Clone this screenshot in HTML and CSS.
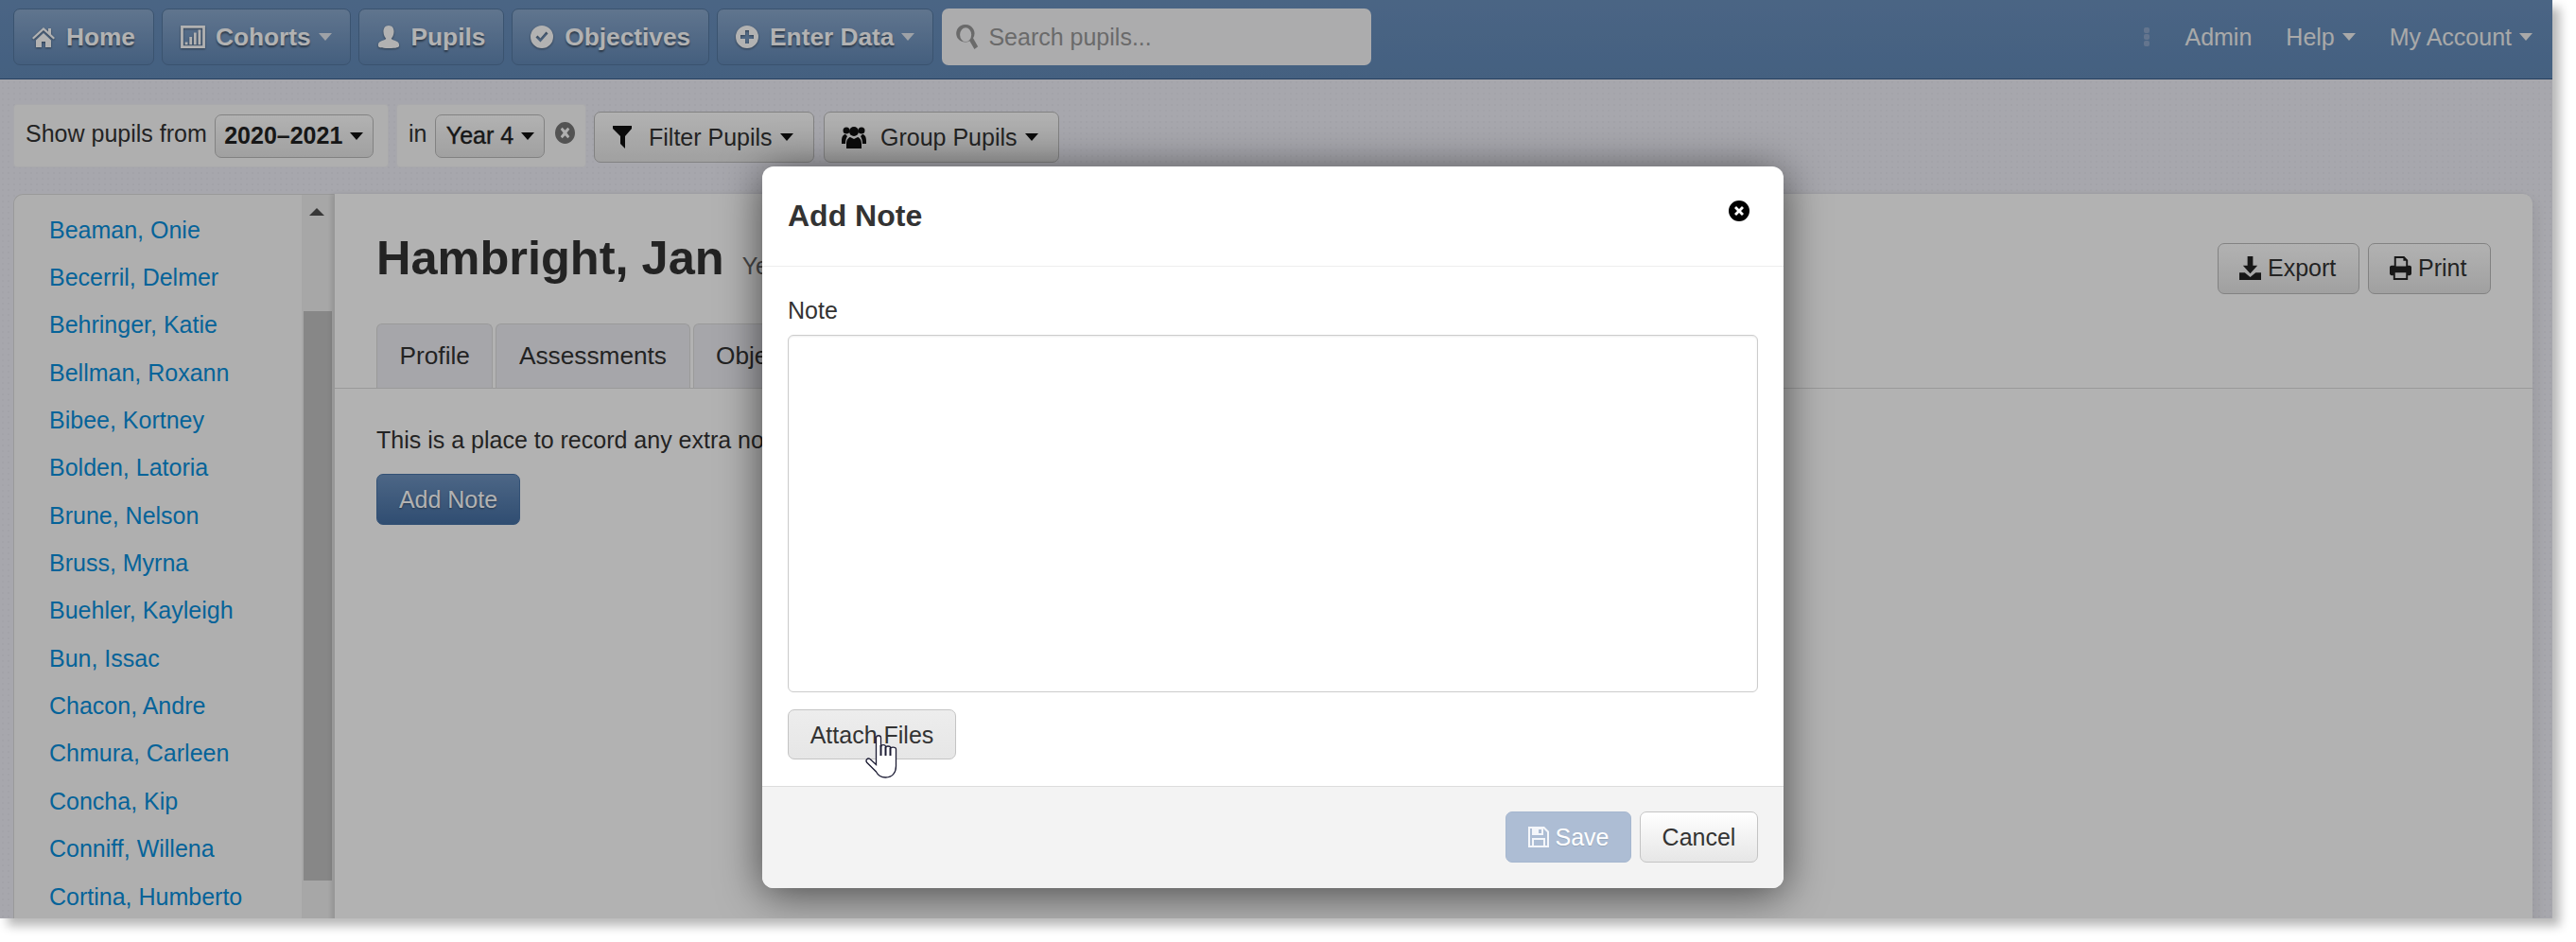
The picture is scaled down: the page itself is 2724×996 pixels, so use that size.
FILE: index.html
```html
<!DOCTYPE html>
<html lang="en">
<head>
<meta charset="utf-8">
<title>Add Note</title>
<link rel="stylesheet" href="styles.css">
</head>
<body>
<div class="window">
  <header class="navbar">
    <a class="nav-btn"><svg class="ni" viewBox="0 0 24 24"><path d="M12 2 0 13l1.500 1.500L12 5l10.500 9.500L24 13l-4-3.700V3h-3v3.500zM4 15.500V23h6v-6h4v6h6v-7.500L12 8z"/></svg>Home</a>
    <a class="nav-btn"><svg class="ni ni-chart" viewBox="0 0 28 26"><path d="M0 0h28v26H0zm3 3v20h22V3zm2 16h3v3H5zm5-6h3v9h-3zm5-5h3v14h-3zm5-3h3v17h-3z" fill-rule="evenodd"/></svg>Cohorts<i class="caret"></i></a>
    <a class="nav-btn"><svg class="ni" viewBox="0 0 24 26"><path d="M12 0c4 0 6 3 6 7s-2 7-3 8c0 2 9 2 9 7v1c0 2-3 3-12 3S0 25 0 23v-1c0-5 9-5 9-7-1-1-3-4-3-8s2-7 6-7z"/></svg>Pupils</a>
    <a class="nav-btn"><svg class="ni" viewBox="0 0 24 24"><path fill-rule="evenodd" d="M12 0a12 12 0 1 0 0 24 12 12 0 0 0 0-24zm6.500 8.500-8 9-5-5 2-2 3 3 6-7z"/></svg>Objectives</a>
    <a class="nav-btn"><svg class="ni" viewBox="0 0 24 24"><path fill-rule="evenodd" d="M12 0a12 12 0 1 0 0 24 12 12 0 0 0 0-24zm-2 5h4v5h5v4h-5v5h-4v-5H5v-4h5z"/></svg>Enter Data<i class="caret"></i></a>
    <div class="search"><svg class="search-icon" viewBox="0 0 24 28"><path fill-rule="evenodd" d="M10 0a10 10 0 0 1 8.500 15.300L24 25l-4 3-5.500-9.500A10 10 0 1 1 10 0zm0 3.500a6.500 8 0 1 0 0 16 6.500 8 0 0 0 0-16z"/></svg><span>Search pupils...</span></div>
    <div class="nav-right">
      <span class="kebab"><b></b><b></b><b></b></span>
      <a class="nav-link link-admin">Admin</a>
      <a class="nav-link link-help">Help<i class="caret"></i></a>
      <a class="nav-link">My Account<i class="caret"></i></a>
    </div>
  </header>

  <section class="filters">
    <div class="well well-year"><span>Show pupils from</span><button class="drop">2020–2021<i class="caret dark"></i></button></div>
    <div class="well well-in"><span>in</span><button class="drop">Year 4<i class="caret dark"></i></button><svg class="clear" viewBox="0 0 22 24"><path fill-rule="evenodd" d="M11 0a11 12 0 1 0 0 24 11 12 0 0 0 0-24zM6 8l2-2 3 3 3-3 2 2-3 4 3 4-2 2-3-3-3 3-2-2 3-4z"/></svg></div>
    <button class="tool tool-filter"><svg class="ti" viewBox="0 0 20 24"><path d="M0 0h20v3l-7 8v13l-5-5v-8L0 3z"/></svg>Filter Pupils<i class="caret dark"></i></button>
    <button class="tool tool-group"><svg class="ti ti-group" viewBox="0 0 26 24"><circle cx="5" cy="5" r="3.500"/><circle cx="21" cy="5" r="3.500"/><circle cx="13" cy="6" r="5"/><path d="M0 16c0-5 2-7 4-7l2 2c-1 2-2 4-2 8H0zM26 16c0-5-2-7-4-7l-2 2c1 2 2 4 2 8h4zM5 24v-5c0-5 3-7 4-7l4 2 4-2c1 0 4 2 4 7v5z"/></svg>Group Pupils<i class="caret dark"></i></button>
  </section>

  <div class="content">
    <aside class="sidebar">
      <ul class="pupil-list">
        <li>Beaman, Onie</li>
        <li>Becerril, Delmer</li>
        <li>Behringer, Katie</li>
        <li>Bellman, Roxann</li>
        <li>Bibee, Kortney</li>
        <li>Bolden, Latoria</li>
        <li>Brune, Nelson</li>
        <li>Bruss, Myrna</li>
        <li>Buehler, Kayleigh</li>
        <li>Bun, Issac</li>
        <li>Chacon, Andre</li>
        <li>Chmura, Carleen</li>
        <li>Concha, Kip</li>
        <li>Conniff, Willena</li>
        <li>Cortina, Humberto</li>
      </ul>
      <div class="scrollbar"><i class="arrow"></i><div class="thumb"></div></div>
    </aside>
    <main class="main">
      <div class="main-head">
        <h1>Hambright, Jan <small>Year 4</small></h1>
        <div class="actions">
          <button class="tool tool-sm tool-export"><svg class="ti ti-sm" viewBox="0 0 24 26"><path d="M9 0h6v10h5l-8 9-8-9h5zM0 18h6l6 5 6-5h6v8H0z"/></svg>Export</button>
          <button class="tool tool-sm tool-print"><svg class="ti ti-sm" viewBox="0 0 24 26"><path fill-rule="evenodd" d="M5 0h11l4 4v6h2c1 0 2 1 2 2v7c0 1-1 2-2 2h-2v5H4v-5H2c-1 0-2-1-2-2v-7c0-1 1-2 2-2h3zm2 2v9h11V5h-3V2zM6 18v6h12v-6z"/></svg>Print</button>
        </div>
      </div>
      <nav class="tabs">
        <a class="tab">Profile</a>
        <a class="tab">Assessments</a>
        <a class="tab">Objectives</a>
        <a class="tab">Notes</a>
      </nav>
      <div class="tab-body">
        <p>This is a place to record any extra notes about this pupil.</p>
        <button class="add-note">Add Note</button>
      </div>
    </main>
  </div>

  <div class="backdrop"></div>
  <div class="modal">
    <div class="modal-head">
      <h2>Add Note</h2>
      <svg class="modal-close" viewBox="0 0 22 22"><path fill-rule="evenodd" d="M11 0a11 11 0 1 0 0 22 11 11 0 0 0 0-22zM6 8l2-2 3 3 3-3 2 2-3 3 3 3-2 2-3-3-3 3-2-2 3-3z"/></svg>
    </div>
    <div class="modal-body">
      <label class="note-label">Note</label>
      <div class="note-area"></div>
      <button class="attach">Attach Files</button>
      <svg class="hand" viewBox="0 0 35 46"><path d="M11.500 3c0-3 5-3 5 0v9.500c0-2.500 5-2.500 5 0v1c0-2 5-2 5 0v1c0-2 6-2 6 .5V33c0 7-4 12-11 12-5 0-8-2-10-6L1.500 29c-1.500-2.500 1-5 3.500-3.500l6.500 6z" fill="#fff" stroke="#1c1c34" stroke-width="1.300"/><path d="M16.500 11v11M21.500 13v9M26.500 14v8" stroke="#1c1c34" stroke-width="2" fill="none"/></svg>
    </div>
    <div class="modal-foot">
      <button class="save"><svg class="save-icon" viewBox="0 0 22 22"><path fill-rule="evenodd" d="M0 0h17l5 5v17H0zm2 2v18h2v-8h14v8h2V6l-4-4v7H4V2zm4 12v6h10v-6zM11 3v4h3V3z"/></svg>Save</button>
      <button class="cancel">Cancel</button>
    </div>
  </div>
</div>
</body>
</html>
```

FILE: styles.css
```css
* { box-sizing: border-box; }
html, body { margin: 0; padding: 0; background: #fff; }
body { font-family: "Liberation Sans", Arial, sans-serif; font-size: 25px; color: #333; }
button { font: inherit; cursor: default; }

.window {
  position: relative;
  width: 2699px;
  height: 971px;
  margin-bottom: 25px;
  overflow: hidden;
  background-color: #f0f0f8;
  background-image: radial-gradient(circle, rgba(0,0,0,.025) 1px, transparent 1.5px);
  background-size: 6px 6px;
  box-shadow: 8px 8px 10px rgba(0,0,0,.28);
}

/* navbar */
.navbar {
  display: flex;
  align-items: flex-start;
  gap: 8px;
  height: 84px;
  padding: 9px 14px 0;
  background: linear-gradient(#6b91be, #628ab8);
  border-bottom: 1px solid #3a5f8c;
}
.nav-btn {
  display: flex;
  align-items: center;
  height: 60px;
  padding: 0 19px;
  border: 1px solid #54779f;
  border-radius: 7px;
  background: linear-gradient(#8aa8cc, #6288b5);
  color: #fff;
  font-weight: bold;
  font-size: 26.25px;
  text-shadow: 0 2px 2px rgba(0,0,0,.45);
}
.ni { width: 24px; height: 24px; fill: #fff; margin-right: 12px; flex: none; filter: drop-shadow(0 1px 1px rgba(0,0,0,.4)); }
.ni-chart { width: 26px; height: 24px; margin-right: 11px; }
.caret {
  display: inline-block;
  width: 0; height: 0;
  margin-left: 8px;
  border-left: 7px solid transparent;
  border-right: 7px solid transparent;
  border-top: 8px solid currentColor;
}
.caret.dark { color: #111; }
.nav-btn .caret { color: #e3e8f0; }
.search {
  display: flex;
  align-items: center;
  width: 454px;
  height: 60px;
  margin-left: 1px;
  padding-left: 15px;
  background: #f6f6f8;
  border-radius: 7px;
  color: #999;
  font-size: 25px;
}
.search-icon { width: 24px; height: 26px; fill: #999; margin-right: 10px; }
.nav-right { display: flex; align-items: center; height: 60px; margin-left: auto; padding-right: 7px; color: #eee; }
.nav-link { display: flex; align-items: center; color: #f2f2f2; }
.link-admin { margin-right: 36px; }
.link-help { margin-right: 36px; }
.kebab { display: flex; flex-direction: column; gap: 1px; margin-right: 37px; }
.kebab b { width: 6px; height: 6px; border-radius: 2px; background: #90a8cc; }

/* filters */
.filters { display: flex; align-items: flex-start; gap: 8px; padding: 26px 0 0 14px; height: 93px; }
.well {
  display: flex;
  align-items: center;
  height: 67px;
  background: #fbfbfb;
  border: 1px solid #f2f2f6;
  border-radius: 4px;
  padding-left: 12px;
  white-space: nowrap;
}
.well-year { width: 397px; }
.well-in { width: 201px; padding-left: 12px; }
.well span { position: relative; top: -2px; }
.drop {
  display: flex;
  align-items: center;
  justify-content: center;
  height: 46px;
  margin-left: 8px;
  padding: 0;
  background: linear-gradient(#fff, #e6e6e6);
  border: 1px solid #bbb;
  border-radius: 7px;
  color: #222;
  font-weight: bold;
  white-space: nowrap;
}
.well-year .drop { width: 168px; }
.well-in .drop { width: 116px; margin-left: 9px; font-weight: normal; -webkit-text-stroke: .4px #222; }
.clear { width: 21px; height: 23px; margin-left: 11px; fill: #777; position: relative; top: -3px; }
.tool {
  display: flex;
  align-items: center;
  height: 54px;
  margin-top: 8px;
  background: linear-gradient(#fff, #e6e6e6);
  border: 1px solid #bbb;
  border-radius: 7px;
  color: #333;
  padding: 0;
}
.tool-filter { width: 233px; padding-left: 19px; }
.tool-group { width: 249px; padding-left: 18px; margin-left: 2px; }
.ti { width: 20px; height: 24px; margin-right: 18px; fill: #111; flex: none; }
.ti-group { width: 26px; margin-right: 15px; }

/* content */
.content { display: flex; height: 800px; margin: 28px 21px 0 14px; }
.sidebar {
  display: flex;
  width: 339px;
  flex: none;
  background: #fbfbfb;
  border: 1px solid #ddd;
  border-width: 1px 0 0 1px;
  border-radius: 10px 0 0 0;
  overflow: hidden;
}
.pupil-list { flex: 1; margin: 0; padding: 11.500px 0 0 37px; list-style: none; color: #088fdc; line-height: 50.36px; white-space: nowrap; }
.scrollbar { display: flex; flex-direction: column; align-items: center; width: 34px; flex: none; background: #f0f0f0; padding-left: 2px; }
.arrow { width: 0; height: 0; margin-top: 14px; border-left: 8px solid transparent; border-right: 8px solid transparent; border-bottom: 8px solid #505050; margin-right: 4px; }
.thumb { width: 30px; height: 602px; margin-top: 101px; margin-right: 2px; background: #c2c2c2; }
.main {
  flex: 1;
  background: #fff;
  border-left: 1px solid #d8d8d8;
  border-radius: 0 10px 0 0;
  box-shadow: -3px 0 4px rgba(0,0,0,.1), 6px 4px 12px rgba(0,0,0,.06);
}
.main-head { display: flex; align-items: center; justify-content: space-between; height: 137px; padding: 0 44px 0 44px; }
h1 { margin: 7px 0 0; color: #333; font-size: 50.500px; line-height: 60px; font-weight: bold; white-space: nowrap; }
h1 small { font-size: 25px; font-weight: normal; color: #666; margin-left: 5px; }
.actions { display: flex; gap: 9px; margin-top: 20px; }
.tool-sm { margin-top: 0; padding: 0 0 0 22px; }
.tool-export { width: 150px; }
.tool-print { width: 130px; padding-left: 22px; }
.ti-sm { width: 23px; height: 25px; margin-right: 7px; fill: #222; }
.tabs { display: flex; gap: 3px; height: 69px; padding-left: 44px; border-bottom: 1px solid #ddd; }
.tab {
  display: flex;
  align-items: center;
  height: 68px;
  padding: 0 23.500px;
  background: #eeeef4;
  border: 1px solid #ddd;
  border-bottom: 0;
  border-radius: 6px 6px 0 0;
  color: #333;
  font-size: 26.25px;
}
.tab-body { padding: 37px 44px 0; }
.tab-body p { margin: 0 0 18px; line-height: 35px; color: #333; }
.add-note {
  height: 54px;
  width: 152px;
  padding: 0;
  background: linear-gradient(#6e93c0, #456fa3);
  border: 1px solid #4a75a8;
  border-radius: 7px;
  color: #fff;
  text-shadow: 0 1px 2px rgba(0,0,0,.4);
}

/* modal */
.backdrop { position: absolute; inset: 0; background: rgba(0,0,0,.3); }
.modal {
  position: absolute;
  left: 806px;
  top: 176px;
  width: 1080px;
  height: 763px;
  display: flex;
  flex-direction: column;
  background: #fff;
  border-radius: 12px;
  box-shadow: 0 6px 45px rgba(0,0,0,.6);
}
.modal-head {
  display: flex;
  align-items: center;
  justify-content: space-between;
  height: 106px;
  padding: 0 36px 0 27px;
  border-bottom: 1px solid #eee;
}
.modal-head h2 { margin: 0; font-size: 32px; font-weight: bold; color: #333; }
.modal-close { width: 22px; height: 22px; fill: #000; position: relative; top: -6px; }
.modal-body { position: relative; flex: 1; padding: 26px 27px 0; display: flex; flex-direction: column; align-items: flex-start; }
.note-label { line-height: 40px; color: #333; height: 46px; }
.note-area { width: 1026px; height: 378px; flex: none; border: 1px solid #ccc; border-radius: 6px; box-shadow: inset 0 1px 2px rgba(0,0,0,.08); }
.attach {
  width: 178px;
  height: 53px;
  margin-top: 18px;
  padding: 1px 0 0;
  background: linear-gradient(#ededed, #e6e6e6);
  border: 1px solid #c4c4c4;
  border-radius: 7px;
  color: #333;
}
.hand { position: absolute; left: 109px; top: 495px; width: 35px; height: 46px; }
.modal-foot {
  display: flex;
  justify-content: flex-end;
  gap: 9px;
  height: 108px;
  padding: 26px 27px 0;
  background: #f3f3f3;
  border-top: 1px solid #ddd;
  border-radius: 0 0 12px 12px;
}
.save, .cancel { height: 54px; padding: 0; border-radius: 7px; display: flex; align-items: center; justify-content: center; }
.save { width: 133px; background: #adbdd4; border: 1px solid #a6b7cf; color: #fff; text-shadow: 0 1px 1px rgba(0,0,0,.12); }
.save-icon { width: 22px; height: 22px; fill: #f4f6fa; margin-right: 7px; }
.cancel { width: 125px; background: linear-gradient(#fff, #e6e6e6); border: 1px solid #c4c4c4; color: #333; }
```
